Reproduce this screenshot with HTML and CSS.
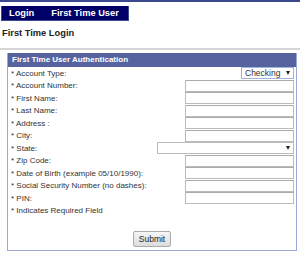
FILE: index.html
```html
<!DOCTYPE html>
<html lang="en">
<head>
  <meta charset="UTF-8">
  <title>First Time Login</title>
  <link rel="stylesheet" href="styles.css">
</head>
<body>
  <div class="topbar">
    <ul class="nav">
      <li>Login</li>
      <li>First Time User</li>
    </ul>
  </div>

  <h1 class="page-title">First Time Login</h1>

  <div class="panel">
    <div class="panel-head">First Time User Authentication</div>
    <table class="form">
      <tr>
        <td class="label">* Account Type:</td>
        <td class="field"><span class="select small">Checking<i class="arrow"></i></span></td>
      </tr>
      <tr><td class="label">* Account Number:</td><td class="field"><span class="input"></span></td></tr>
      <tr><td class="label">* First Name:</td><td class="field"><span class="input"></span></td></tr>
      <tr><td class="label">* Last Name:</td><td class="field"><span class="input"></span></td></tr>
      <tr><td class="label">* Address :</td><td class="field"><span class="input"></span></td></tr>
      <tr><td class="label">* City:</td><td class="field"><span class="input"></span></td></tr>
      <tr>
        <td class="label">* State:</td>
        <td class="field"><span class="select wide"><i class="arrow"></i></span></td>
      </tr>
      <tr><td class="label">* Zip Code:</td><td class="field"><span class="input"></span></td></tr>
      <tr><td class="label">* Date of Birth (example 05/10/1990):</td><td class="field"><span class="input"></span></td></tr>
      <tr><td class="label">* Social Security Number (no dashes):</td><td class="field"><span class="input"></span></td></tr>
      <tr><td class="label">* PIN:</td><td class="field"><span class="input"></span></td></tr>
      <tr><td class="label" colspan="2">* Indicates Required Field</td></tr>
    </table>
    <div class="actions">
      <span class="button">Submit</span>
    </div>
  </div>
</body>
</html>
```

FILE: styles.css
```css
body {
  margin: 0;
  font-family: "Liberation Sans", Arial, sans-serif;
  background: #fff;
  color: #222;
}

.topbar {
  border-top: 2px solid #3b4a8c;
  height: 14px;
}

.nav {
  list-style: none;
  margin: 0 0 0 1px;
  padding: 0 9px 0 7px;
  display: inline-flex;
  gap: 17px;
  height: 14px;
  align-items: center;
  background: #000066;
  border: 1px solid #3b4a8c;
  border-top: 0;
}

.nav li {
  color: #fff;
  font-weight: bold;
  font-size: 9.3px;
}

.page-title {
  font-size: 9.3px;
  font-weight: bold;
  line-height: 11px;
  margin: 0;
  padding: 12px 2px 9px;
  border-bottom: 2px solid #d6d6d6;
}

.panel {
  margin: 3px 3px 0 7px;
  border: 1px solid #9aa8d4;
  border-top: 0;
  height: 197px;
}

.panel-head {
  background: #56639f;
  color: #fff;
  font-size: 8px;
  font-weight: bold;
  height: 14px;
  line-height: 14px;
  padding-left: 4px;
}

.form {
  width: 100%;
  border-collapse: collapse;
}

.form td {
  padding: 0;
  height: 12.5px;
  font-size: 8px;
  color: #333;
}

.label {
  padding-left: 3px !important;
  white-space: nowrap;
}

.field {
  text-align: right;
  padding-right: 2px !important;
}

.input {
  display: inline-block;
  box-sizing: border-box;
  width: 109px;
  height: 12px;
  border: 1px solid #bbb;
  border-top-color: #aaa;
  vertical-align: middle;
}

.select {
  display: inline-flex;
  box-sizing: border-box;
  height: 12px;
  border: 1px solid #bbb;
  align-items: center;
  font-size: 8.5px;
  color: #333;
  padding: 0 3px 0 3px;
  vertical-align: middle;
}

.select.small {
  width: 53px;
  border-color: #9fb3e0;
}

.select.wide {
  width: 137px;
}

.arrow {
  border-left: 2.5px solid transparent;
  border-right: 2.5px solid transparent;
  border-top: 4px solid #222;
  margin-left: auto;
}

.actions {
  text-align: center;
  margin-top: 11px;
}

.button {
  display: inline-block;
  font-size: 8.5px;
  color: #222;
  padding: 2px 5px;
  border: 1px solid #aaa;
  border-radius: 2px;
  background: linear-gradient(#f6f6f6, #dcdcdc);
}
```
